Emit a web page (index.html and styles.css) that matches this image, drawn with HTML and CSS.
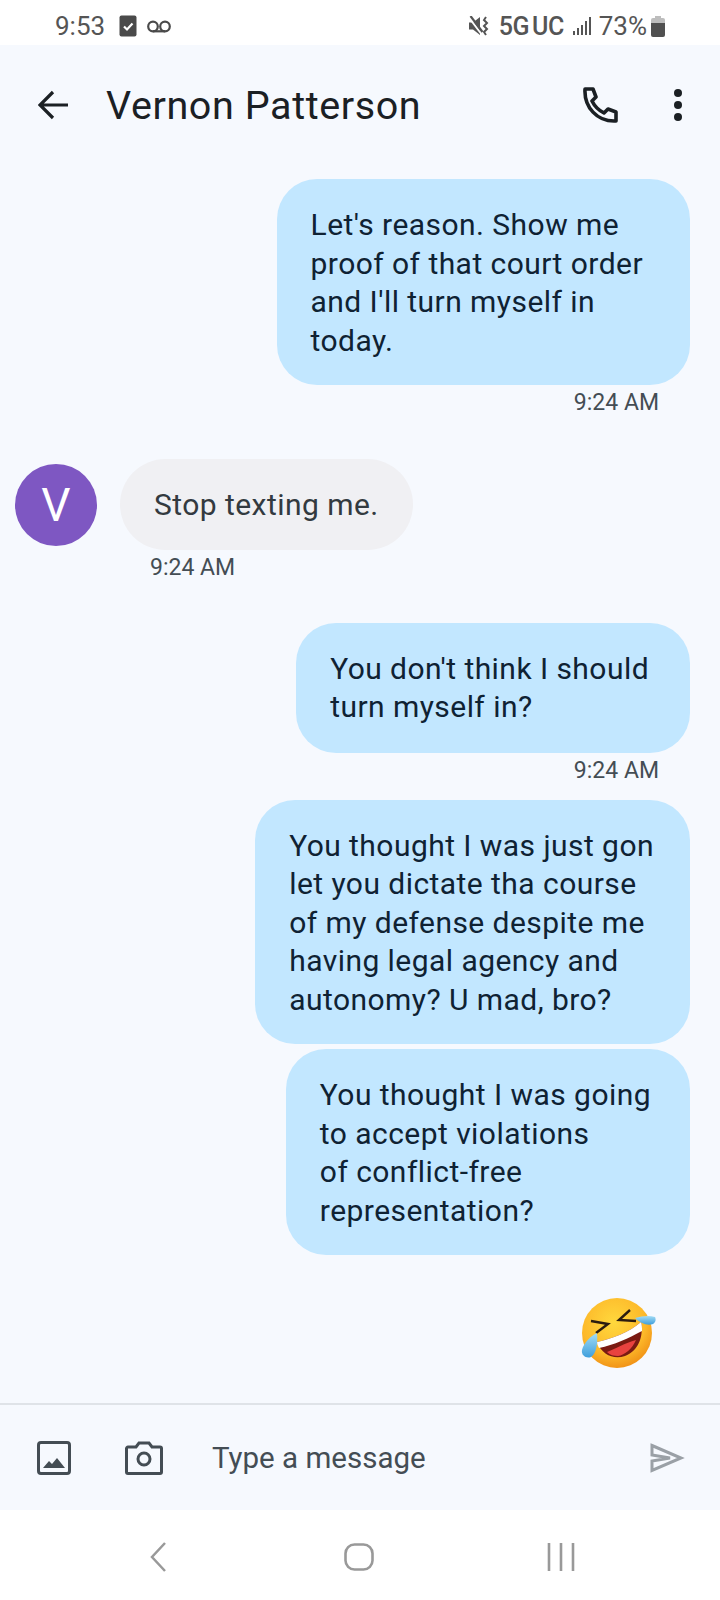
FILE: index.html
```html
<!DOCTYPE html>
<html lang="en">
<head>
    <meta charset="UTF-8">
    <meta name="viewport" content="width=device-width, initial-scale=1.0">
    <title>Vernon Patterson</title>
    <link rel="stylesheet" href="styles.css">
</head>
<body>
    <div class="phone">
        <div class="status">
            <div class="status-left">
                <span class="clock">9:53</span>
                <svg class="ic-check" width="18" height="22" viewBox="0 0 18 22"><rect x="0.5" y="0.5" width="17" height="21" rx="2" fill="#4a4a4a"/><path d="M5 11.5l3 3 5.5-6" fill="none" stroke="#fff" stroke-width="2.2"/></svg>
                <svg class="ic-vm" width="24" height="13" viewBox="0 0 24 13"><circle cx="6" cy="6.5" r="4.800" fill="none" stroke="#4a4a4a" stroke-width="2.200"/><circle cx="18" cy="6.5" r="4.800" fill="none" stroke="#4a4a4a" stroke-width="2.200"/><path d="M6 11.300h12" stroke="#4a4a4a" stroke-width="2.200"/></svg>
            </div>
            <div class="status-right">
                <svg class="ic-mute" width="20" height="20" viewBox="0 0 20 20"><path d="M0 6.500h4L11 1v18l-7-5.500H0z" fill="#555"/><path d="M0 1.500l12 16" stroke="#fff" stroke-width="2"/><path d="M1.500 0l12 16" stroke="#555" stroke-width="2.200"/><path d="M17 1l-2 3 3 3-3 3 3 3-3 3 2 3" fill="none" stroke="#555" stroke-width="2"/></svg>
                <span class="net">5G</span><span class="net net-uc">UC</span>
                <svg class="ic-signal" width="19" height="20" viewBox="0 0 19 20"><g fill="#555"><rect x="0" y="15" width="2" height="4"/><rect x="4" y="12" width="2" height="7"/><rect x="8" y="9" width="2" height="10"/><rect x="12" y="5" width="2" height="14"/><rect x="16" y="1" width="2" height="18"/></g></svg>
                <span class="pct">73%</span>
                <svg class="ic-batt" width="14" height="21" viewBox="0 0 14 21"><path d="M4 0h6v2h2a2 2 0 0 1 2 2v4H0V4a2 2 0 0 1 2-2h2z" fill="#bdbdbd"/><path d="M0 7h14v12a2 2 0 0 1-2 2H2a2 2 0 0 1-2-2z" fill="#505050"/></svg>
            </div>
        </div>

        <div class="screen">
            <div class="header">
                <svg class="ic-back" width="30" height="30" viewBox="0 0 30 30"><path d="M30 15H3M15 2L2 15l13 13" fill="none" stroke="#1b2024" stroke-width="3.2"/></svg>
                <div class="title">Vernon Patterson</div>
                <svg class="ic-phone" width="36" height="36" viewBox="0 0 36 36"><path d="M3 2h8l3 8-4 4c2.500 5 6 9 12 12l4-4 8 3v9c-19 1-32-14-31-32z" fill="none" stroke="#1b2024" stroke-width="3.600" stroke-linejoin="round"/></svg>
                <div class="dots"><i></i><i></i><i></i></div>
            </div>

            <div class="messages">
                <div class="msg-out first">
                    <div class="bubble">Let's reason. Show me<br>proof of that court order<br>and I'll turn myself in<br>today.</div>
                    <div class="time">9:24 AM</div>
                </div>

                <div class="msg-in">
                    <div class="avatar">V</div>
                    <div class="msg-in-body">
                        <div class="bubble bubble-in">Stop texting me.</div>
                        <div class="time">9:24 AM</div>
                    </div>
                </div>

                <div class="msg-out second">
                    <div class="bubble">You don't think I should<br>turn myself in?</div>
                    <div class="time">9:24 AM</div>
                </div>

                <div class="msg-out third">
                    <div class="bubble">You thought I was just gon<br>let you dictate tha course<br>of my defense despite me<br>having legal agency and<br>autonomy? U mad, bro?</div>
                </div>

                <div class="msg-out fourth">
                    <div class="bubble">You thought I was going<br>to accept violations<br>of conflict-free<br>representation?</div>
                </div>

                <div class="msg-out emoji-row">
                    <svg width="76" height="72" viewBox="0 0 76 72">
                        <defs>
                            <radialGradient id="face" cx="45%" cy="35%" r="70%"><stop offset="0" stop-color="#ffd83d"/><stop offset="0.65" stop-color="#fdb92a"/><stop offset="1" stop-color="#ee8a12"/></radialGradient>
                            <linearGradient id="tear" x1="0" y1="0" x2="0" y2="1"><stop offset="0" stop-color="#a4dcf5"/><stop offset="1" stop-color="#3f9fdc"/></linearGradient>
                        </defs>
                        <circle cx="37" cy="36" r="35" fill="url(#face)"/>
                        <path d="M17 45c14-3 33-10 44-20 3 15-3 29-16 34-11 4-23-1-28-14z" fill="#7a1a12"/>
                        <path d="M27 55c8-3 18-9 29-12-4 9-11 15-18 16-4 0-8-1-11-4z" fill="#e8423f"/>
                        <path d="M17 45c14-3 33-10 44-20 1 3 1 6 1 9-13 7-28 14-43 17-1-2-2-4-2-6z" fill="#fff"/>
                        <path d="M11 24l17 3-12 9" fill="none" stroke="#2b1c10" stroke-width="2.400"/>
                        <path d="M50 13l-11 10 17 1" fill="none" stroke="#2b1c10" stroke-width="2.400"/>
                        <path d="M55 21c7-2 14-3 20-1 1 2 1 5-2 7-6 2-13-1-18-6z" fill="url(#tear)"/>
                        <path d="M17 36c-6 3-13 9-15 17-1 5 4 9 9 7 5-3 7-13 6-24z" fill="url(#tear)"/>
                    </svg>
                </div>
            </div>

            <div class="composer">
                <svg class="ic-image" width="34" height="34" viewBox="0 0 34 34"><rect x="1.500" y="1.500" width="31" height="31" rx="2.500" fill="none" stroke="#444d54" stroke-width="3"/><path d="M6 27l6-7 3 3 5-6 8 10z" fill="#444d54"/></svg>
                <svg class="ic-camera" width="38" height="34" viewBox="0 0 38 34"><path d="M3 6h8l3-4h10l3 4h8a1.500 1.500 0 0 1 1.500 1.500V31a1.500 1.500 0 0 1-1.500 1.500H3A1.500 1.500 0 0 1 1.500 31V7.500A1.500 1.500 0 0 1 3 6z" fill="none" stroke="#444d54" stroke-width="3"/><circle cx="19" cy="18" r="6" fill="none" stroke="#444d54" stroke-width="3"/></svg>
                <div class="placeholder">Type a message</div>
                <svg class="ic-send" width="35" height="30" viewBox="0 0 35 30"><path d="M2 2.500L31 15 2 27.500V18l18-3-18-3z" fill="none" stroke="#9aa0a6" stroke-width="3"/></svg>
            </div>
        </div>

        <div class="navbar">
            <svg width="16" height="30" viewBox="0 0 16 30"><path d="M15 1L2 15l13 14" fill="none" stroke="#999" stroke-width="2.500"/></svg>
            <svg class="ic-home" width="30" height="28" viewBox="0 0 30 28"><rect x="1.500" y="1.500" width="27" height="25" rx="9" fill="none" stroke="#999" stroke-width="2.600"/></svg>
            <svg width="28" height="28" viewBox="0 0 28 28"><path d="M2 0v28M14 0v28M26 0v28" stroke="#999" stroke-width="2.600"/></svg>
        </div>
    </div>
</body>
</html>
```
FILE: styles.css
```css
html, body {
    margin: 0;
    padding: 0;
}

body {
    font-family: Roboto, "Liberation Sans", sans-serif;
    background-color: #fff;
}

.phone {
    width: 720px;
    height: 1600px;
    display: flex;
    flex-direction: column;
    overflow: hidden;
}

.status {
    height: 45px;
    display: flex;
    justify-content: space-between;
    align-items: center;
    padding: 7px 55px 0;
    color: #555;
    font-size: 26px;
    box-sizing: border-box;
    flex: none;
}

.status-left, .status-right {
    display: flex;
    align-items: center;
}

.ic-check {
    margin-left: 14px;
}

.ic-vm {
    margin-left: 10px;
}

.ic-mute {
    margin-right: 10px;
}

.net {
    font-weight: 500;
    font-size: 25px;
    letter-spacing: -0.5px;
}

.net-uc {
    margin-left: 3px;
}

.ic-signal {
    margin-left: 9px;
}

.pct {
    margin-left: 7px;
}

.ic-batt {
    margin-left: 4px;
}

.screen {
    flex: 1;
    background-color: #f6f9fe;
    display: flex;
    flex-direction: column;
}

.header {
    height: 114px;
    display: flex;
    align-items: center;
    padding: 6px 0 0 38px;
    box-sizing: border-box;
    flex: none;
}

.title {
    margin-left: 38px;
    font-size: 39.5px;
    letter-spacing: 0.6px;
    color: #1b2024;
    width: 476px;
}

.dots {
    margin-left: 56px;
    display: flex;
    flex-direction: column;
    gap: 4px;
}

.dots i {
    display: block;
    width: 8px;
    height: 8px;
    border-radius: 50%;
    background-color: #1b2024;
}

.messages {
    flex: 1;
    padding: 20px 30px 0 15px;
    display: flex;
    flex-direction: column;
}

.bubble {
    background-color: #c2e7ff;
    color: #0f2233;
    font-size: 30px;
    letter-spacing: 0.45px;
    line-height: 38.5px;
    padding: 27px 43px 25px 34px;
    border-radius: 40px;
}

.msg-out {
    display: flex;
    flex-direction: column;
    align-items: flex-end;
}

.time {
    font-size: 23px;
    line-height: 26px;
    color: #444d54;
    margin-top: 5px;
    padding-right: 31px;
}

.first .bubble {
    padding-right: 47px;
}

.second {
    margin-top: 42px;
}

.second .bubble {
    padding-right: 41px;
    padding-bottom: 26px;
}

.third {
    margin-top: 16px;
}

.third .bubble {
    padding-right: 36px;
}

.fourth {
    margin-top: 5px;
}

.fourth .bubble {
    padding-right: 39px;
}

.msg-in {
    margin-top: 43px;
    display: flex;
    align-items: flex-start;
}

.avatar {
    width: 82px;
    height: 82px;
    margin-top: 5px;
    border-radius: 50%;
    background-color: #7e57c2;
    color: #fff;
    font-size: 46px;
    display: flex;
    align-items: center;
    justify-content: center;
}

.msg-in-body {
    margin-left: 23px;
}

.bubble-in {
    background-color: #f0f0f3;
    color: #333a40;
    padding-right: 34px;
    border-radius: 46px;
}

.msg-in-body .time {
    padding-left: 30px;
    padding-right: 0;
}

.emoji-row {
    margin-top: 42px;
    padding-right: 34px;
}

.composer {
    height: 107px;
    border-top: 2px solid #dfe3e8;
    display: flex;
    align-items: center;
    padding: 0 35px 0 37px;
    box-sizing: border-box;
    flex: none;
}

.ic-camera {
    margin-left: 54px;
}

.placeholder {
    margin-left: 49px;
    flex: 1;
    font-size: 29.5px;
    color: #444d54;
}

.navbar {
    height: 90px;
    flex: none;
    background-color: #fff;
    display: flex;
    align-items: center;
    padding: 3px 145px 0 150px;
    box-sizing: border-box;
    justify-content: space-between;
}

.ic-home {
    margin-left: 4px;
}
```
